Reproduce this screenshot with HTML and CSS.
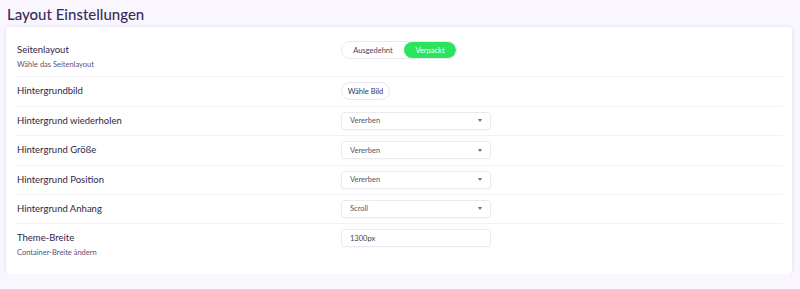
FILE: index.html
```html
<!DOCTYPE html>
<html lang="de">
<head>
    <meta charset="UTF-8">
    <meta name="viewport" content="width=device-width, initial-scale=1.0">
    <title>Layout Einstellungen</title>
    <link rel="stylesheet" href="styles.css">
</head>
<body>
    <div class="page">
        <h1 class="page-title">Layout Einstellungen</h1>
        <section class="card">
            <div class="row">
                <div class="label">
                    <p class="label-title">Seitenlayout</p>
                    <p class="label-desc">Wähle das Seitenlayout</p>
                </div>
                <div class="toggle">
                    <button class="toggle-btn">Ausgedehnt</button>
                    <button class="toggle-btn active">Verpackt</button>
                </div>
            </div>
            <div class="row">
                <div class="label"><p class="label-title">Hintergrundbild</p></div>
                <div class="control"><button class="pill-btn">Wähle Bild</button></div>
            </div>
            <div class="row">
                <div class="label"><p class="label-title">Hintergrund wiederholen</p></div>
                <div class="select"><span>Vererben</span><span class="caret"></span></div>
            </div>
            <div class="row">
                <div class="label"><p class="label-title">Hintergrund Größe</p></div>
                <div class="select"><span>Vererben</span><span class="caret"></span></div>
            </div>
            <div class="row">
                <div class="label"><p class="label-title">Hintergrund Position</p></div>
                <div class="select"><span>Vererben</span><span class="caret"></span></div>
            </div>
            <div class="row">
                <div class="label"><p class="label-title">Hintergrund Anhang</p></div>
                <div class="select"><span>Scroll</span><span class="caret"></span></div>
            </div>
            <div class="row">
                <div class="label">
                    <p class="label-title">Theme-Breite</p>
                    <p class="label-desc">Container-Breite ändern</p>
                </div>
                <div class="text-input">1300px</div>
            </div>
        </section>
    </div>
</body>
</html>
```
FILE: styles.css
```css
body {
    margin: 0;
    padding: 0;
    background-color: #f9f7fd;
    font-family: Lato, "Noto Sans", sans-serif;
    color: #3d3254;
}
.page {
    padding: 5px 8px 0 6px;
}
.page-title {
    margin: 0 0 4px 1px;
    font-size: 15px;
    line-height: 18px;
    font-weight: 500;
    color: #3a2b5c;
}
.card {
    background: #fff;
    border-radius: 4px;
    box-shadow: 0 0 4px rgba(140, 110, 220, 0.22);
    padding: 9px 10px;
}
.row {
    display: grid;
    grid-template-columns: 325px 1fr;
    align-items: start;
    padding: 5px 0 5.4px;
    border-bottom: 1px solid #f4f2f7;
}
.row:last-child {
    border-bottom: none;
}
.label p {
    margin: 0;
}
.label-title {
    font-size: 9.5px;
    line-height: 18px;
    color: #2f2546;
    padding-left: 1px;
}
.label-desc {
    font-size: 7.5px;
    line-height: 12px;
    color: #5e4f74;
    padding-left: 1px;
}
.control {
    display: flex;
}
.toggle {
    display: flex;
    width: 116px;
    height: 18px;
    box-sizing: border-box;
    border: 1px solid #ebe8f0;
    border-radius: 9px;
    overflow: hidden;
}
.toggle-btn {
    border: none;
    background: #fff;
    font-family: inherit;
    font-size: 7.5px;
    color: #4a3f62;
    padding: 0;
    width: 62px;
    cursor: pointer;
}
.toggle-btn.active {
    flex: 1;
    background: #2be45b;
    color: #fff;
    border-radius: 9px;
}
.pill-btn {
    height: 18px;
    width: 49px;
    padding: 0;
    border: 1px solid #e9e6ef;
    border-radius: 9px;
    background: #fff;
    font-family: inherit;
    font-size: 7.5px;
    color: #3d3254;
}
.select,
.text-input {
    display: flex;
    align-items: center;
    justify-content: space-between;
    width: 150px;
    height: 18px;
    box-sizing: border-box;
    padding: 0 8px 0 8px;
    border: 1px solid #eceaf1;
    border-radius: 3px;
    box-shadow: 0 1px 2px rgba(0, 0, 0, 0.03);
    font-size: 7.5px;
    color: #555463;
}
.text-input {
    color: #3f3f4a;
}
.caret {
    width: 0;
    height: 0;
    border-left: 2.5px solid transparent;
    border-right: 2.5px solid transparent;
    border-top: 3px solid #6a6a72;
}
```
